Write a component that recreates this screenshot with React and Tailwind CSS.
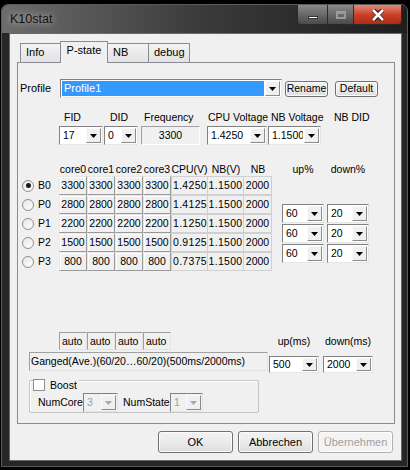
import React from "react";

const rows = [
  { id: "B0", f: "3300", cpu: "1.4250", sel: true },
  { id: "P0", f: "2800", cpu: "1.4125" },
  { id: "P1", f: "2200", cpu: "1.1250" },
  { id: "P2", f: "1500", cpu: "0.9125" },
  { id: "P3", f: "800", cpu: "0.7375" },
];

const Arrow = ({ disabled }) => (
  <svg width="7" height="4" viewBox="0 0 7 4">
    <path d="M0 0H7L3.5 4Z" fill={disabled ? "#a8a8a8" : "#000"} />
  </svg>
);

const Combo = ({ value, className = "", disabled = false, selected = false }) => (
  <div
    className={`flex border border-[#828282] border-b-[#e6e6e6] border-r-[#e6e6e6] p-px ${
      disabled ? "bg-[#f0f0f0]" : "bg-white"
    } ${className}`}
  >
    <div
      className={`flex min-w-0 flex-1 items-center overflow-hidden pl-[2px] ${
        selected ? "bg-[#3399ff] text-white" : disabled ? "text-[#a0a0a0]" : "text-black"
      }`}
    >
      {value}
    </div>
    <div className="ml-px flex w-[15px] items-center justify-center border border-[#fbfbfb] border-b-[#8c8c8c] border-r-[#8c8c8c] bg-[#f0f0f0]">
      <Arrow disabled={disabled} />
    </div>
  </div>
);

const Btn = ({ children, className = "", disabled = false }) => (
  <div
    className={`flex items-center justify-center rounded-[3px] border ${
      disabled
        ? "border-[#adb2b5] bg-[#f4f4f4] text-[#a0a0a0]"
        : "border-[#707070] bg-gradient-to-b from-[#f2f2f2] via-[#ebebeb] to-[#dddddd] text-black"
    } shadow-[inset_0_0_0_1px_#fcfcfc] ${className}`}
  >
    {children}
  </div>
);

const Radio = ({ on }) => (
  <div className="flex h-[12px] w-[12px] items-center justify-center rounded-full border border-[#8e8f8f] bg-gradient-to-br from-[#e6e6e6] to-white">
    {on && <div className="h-[5px] w-[5px] rounded-full bg-[#1b1b1b]" />}
  </div>
);

const Tab = ({ label, selected, w }) => (
  <div
    className={`-ml-px flex border border-b-0 border-[#898c95] ${w} ${
      selected
        ? "relative z-10 -mb-px h-[22px] justify-center bg-[#f0f0f0] pt-[3px] text-[11px]"
        : "h-[19px] bg-gradient-to-b from-[#f3f3f3] to-[#e3e3e3] pl-[5px] pt-[3px] text-[11px]"
    }`}
  >
    {label}
  </div>
);

export default function App() {
  return (
    <div className="h-[470px] w-[410px] overflow-hidden bg-black pt-[4px] font-['Liberation_Sans',Arial,sans-serif] text-[10.5px] leading-none text-black">
      <div className="ml-px h-[463px] w-[407px] rounded-t-[7px] border border-[#5a5a5a] bg-[#262626]">
        {/* title bar */}
        <div className="flex h-[28px] items-start rounded-t-[6px] bg-gradient-to-r from-[#6d6d6d] via-[#3a3a3a] to-[#1e1e1e]">
          <div className="mt-[8px] ml-[8px] text-[12.5px] text-[#111] [text-shadow:0_0_6px_rgba(255,255,255,0.7)]">
            K10stat
          </div>
          <div className="ml-auto mr-[5px] flex h-[20px] overflow-hidden rounded-b-[4px] border border-t-0 border-[#2a2a2a]">
            <div className="flex w-[30px] items-end justify-center border-r border-[#2a2a2a] bg-gradient-to-b from-[#8a8a8a] to-[#4a4a4a] pb-[5px]">
              <div className="h-[3px] w-[10px] border border-[#333] bg-white" />
            </div>
            <div className="flex w-[26px] items-center justify-center border-r border-[#2a2a2a] bg-gradient-to-b from-[#8a8a8a] to-[#4a4a4a]">
              <div className="h-[8px] w-[10px] border-2 border-[#9a9a9a] border-t-[3px]" />
            </div>
            <div className="flex w-[47px] items-center justify-center bg-gradient-to-b from-[#e08a78] via-[#c8412a] to-[#b02a14]">
              <svg width="14" height="12" viewBox="0 0 14 12">
                <path
                  d="M2 1L7 5 12 1M2 11L7 7 12 11"
                  stroke="#3a1a12"
                  strokeWidth="4.5"
                  fill="none"
                />
                <path
                  d="M2 1L12 11M12 1L2 11"
                  stroke="#fff"
                  strokeWidth="2.6"
                  fill="none"
                />
              </svg>
            </div>
          </div>
        </div>

        {/* client */}
        <div className="ml-[7px] h-[428px] w-[393px] border border-[#6a6a6a] bg-[#f0f0f0] pt-[7px]">
          {/* tabs */}
          <div className="ml-[10px] flex h-[21px] items-end pl-px">
            <Tab label="Info" w="w-[41px]" />
            <Tab label="P-state" w="w-[48px]" selected />
            <Tab label="NB" w="w-[42px]" />
            <Tab label="debug" w="w-[42px]" />
          </div>

          {/* panel */}
          <div className="ml-[7px] h-[362px] w-[378px] border border-[#898c95] bg-[#f0f0f0]">
            {/* profile row */}
            <div className="mt-[16px] flex h-[19px] items-center">
              <div className="w-[42px] pl-[2px] text-[11px]">Profile</div>
              <Combo value="Profile1" selected className="h-[19px] w-[222px] text-[11px]" />
              <Btn className="ml-[3px] h-[16px] w-[43px]">Rename</Btn>
              <Btn className="ml-[7px] h-[16px] w-[43px]">Default</Btn>
            </div>

            {/* labels */}
            <div className="mt-[13px] flex h-[13px] items-center pl-[46px]">
              <div className="w-[46px]">FID</div>
              <div className="w-[34px]">DID</div>
              <div className="w-[64px]">Frequency</div>
              <div className="w-[63px]">CPU Voltage</div>
              <div className="w-[63px]">NB Voltage</div>
              <div>NB DID</div>
            </div>

            {/* combos */}
            <div className="mt-[2px] flex h-[19px] pl-[41px]">
              <Combo value="17" className="w-[44px]" />
              <Combo value="0" className="ml-px w-[34px]" />
              <div className="ml-[3px] flex w-[59px] items-center justify-center border border-[#a0a0a0] border-b-white border-r-white">
                3300
              </div>
              <Combo value="1.4250" className="ml-[7px] w-[60px]" />
              <Combo value="1.1500" className="ml-px w-[53px]" />
            </div>

            {/* p-state grid */}
            <div className="mt-[18px] flex">
              <div>
                <div className="flex h-[13px] items-center pl-[41px]">
                  {["core0", "core1", "core2", "core3"].map((c) => (
                    <div key={c} className="w-[28px] text-center">
                      {c}
                    </div>
                  ))}
                  <div className="w-[37px] text-center">CPU(V)</div>
                  <div className="w-[36px] text-center">NB(V)</div>
                  <div className="w-[28px] text-center">NB</div>
                </div>
                {rows.map((r) => (
                  <div key={r.id} className="flex h-[19px] items-center">
                    <div className="flex w-[41px] items-center pl-[4px]">
                      <Radio on={r.sel} />
                      <span className="ml-[4px]">{r.id}</span>
                    </div>
                    {[0, 1, 2, 3].map((i) => (
                      <div
                        key={i}
                        className="flex h-[19px] w-[28px] items-center justify-center border border-[#9a9a9a] border-l-[#e8e8e8] border-t-[#e8e8e8] shadow-[inset_1px_1px_0_#fff]"
                      >
                        {r.f}
                      </div>
                    ))}
                    <div className="flex h-[19px] w-[37px] items-center overflow-hidden border border-[#d0d0d0] pl-px tracking-[0.3px]">
                      {r.cpu}
                    </div>
                    <div className="flex h-[19px] w-[36px] items-center justify-center border border-l-0 border-[#d0d0d0] tracking-[0.3px]">
                      1.1500
                    </div>
                    <div className="flex h-[19px] w-[28px] items-center justify-center border border-l-0 border-[#d0d0d0]">
                      2000
                    </div>
                  </div>
                ))}
              </div>

              <div className="ml-[10px]">
                <div className="flex h-[13px] items-center">
                  <div className="w-[42px] text-center">up%</div>
                  <div className="ml-[3px] w-[42px] text-center">down%</div>
                </div>
                <div className="mt-[28px] flex flex-col gap-px">
                  {[0, 1, 2].map((i) => (
                    <div key={i} className="flex">
                      <Combo value="60" className="h-[19px] w-[42px]" />
                      <Combo value="20" className="ml-[3px] h-[19px] w-[42px]" />
                    </div>
                  ))}
                </div>
              </div>
            </div>

            {/* auto row */}
            <div className="mt-[61px] flex h-[18px] items-center pl-[41px]">
              {[0, 1, 2, 3].map((i) => (
                <div
                  key={i}
                  className="flex h-[18px] w-[28px] items-center border border-[#a0a0a0] border-b-[#e3e3e3] border-r-[#e3e3e3] pl-[2px]"
                >
                  auto
                </div>
              ))}
              <div className="ml-[98px] w-[50px] text-center">up(ms)</div>
              <div className="ml-[4px] w-[50px] text-center">down(ms)</div>
            </div>

            {/* ganged row */}
            <div className="mt-[2px] flex items-start">
              <div className="ml-[11px] flex h-[19px] w-[239px] items-center border border-[#a0a0a0] border-b-[#e3e3e3] border-r-[#e3e3e3] pl-px">
                Ganged(Ave.)(60/20…60/20)(500ms/2000ms)
              </div>
              <Combo value="500" className="mt-[4px] ml-px h-[17px] w-[50px]" />
              <Combo value="2000" className="mt-[4px] ml-[4px] h-[17px] w-[50px]" />
            </div>

            {/* boost group */}
            <div className="relative mt-[7px] ml-[11px] h-[33px] w-[230px] rounded-[2px] border border-[#c5c5c5] shadow-[inset_1px_1px_0_#fff]">
              <div className="absolute -top-[2px] left-[3px] flex items-center bg-[#f0f0f0] pr-[2px]">
                <div className="h-[12px] w-[12px] border border-[#8e8f8f] bg-white" />
                <span className="ml-[5px]">Boost</span>
              </div>
              <div className="mt-[12px] flex h-[19px] items-center pl-[8px]">
                <div className="w-[45px]">NumCore</div>
                <Combo value="3" disabled className="h-[19px] w-[35px]" />
                <div className="ml-[5px] w-[47px]">NumState</div>
                <Combo value="1" disabled className="h-[19px] w-[33px]" />
              </div>
            </div>
          </div>

          {/* dialog buttons */}
          <div className="mt-[7px] flex gap-[5px] pl-[148px] text-[11px]">
            <Btn className="h-[22px] w-[75px]">OK</Btn>
            <Btn className="h-[22px] w-[75px]">Abbrechen</Btn>
            <Btn className="h-[22px] w-[75px]" disabled>
              Übernehmen
            </Btn>
          </div>
        </div>
      </div>
    </div>
  );
}
